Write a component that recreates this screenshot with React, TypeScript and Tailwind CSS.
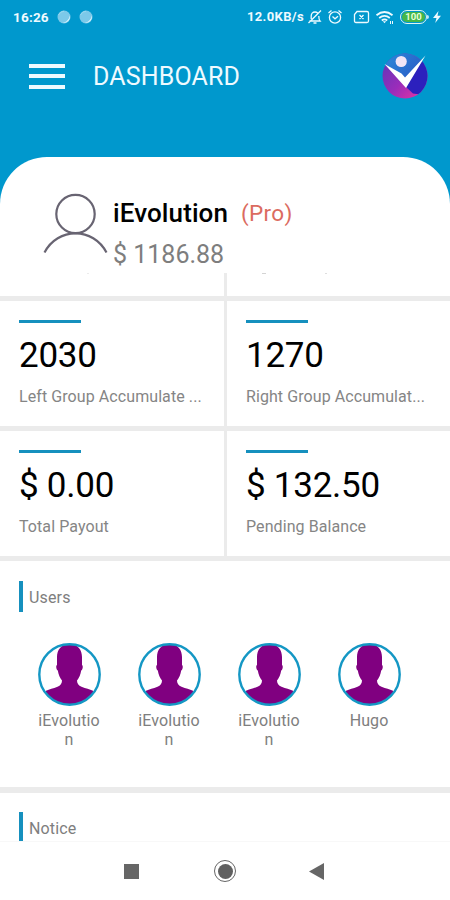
import type { ReactNode } from 'react';

const stats = [
  { value: '2030', label: 'Left Group Accumulate ...' },
  { value: '1270', label: 'Right Group Accumulat...' },
  { value: '$ 0.00', label: 'Total Payout' },
  { value: '$ 132.50', label: 'Pending Balance' },
];

const users = [
  { id: 1, name: 'iEvolution' },
  { id: 2, name: 'iEvolution' },
  { id: 3, name: 'iEvolution' },
  { id: 4, name: 'Hugo' },
];

export default function App() {
  return (
    <div className="flex h-[900px] w-[450px] flex-col overflow-hidden bg-white font-['Roboto',sans-serif]">
      <header className="flex h-[157px] shrink-0 flex-col bg-[#0098cd] text-[#eefaff]">
        <StatusBar />
        <div className="flex h-[84px] items-center pr-[22px] pl-[29px]">
          <div className="flex h-[25px] w-9 flex-col justify-between">
            <div className="h-1 bg-[#eefaff]" />
            <div className="h-1 bg-[#eefaff]" />
            <div className="h-1 bg-[#eefaff]" />
          </div>
          <h1 className="ml-7 pt-0.5 text-[25px] leading-8 tracking-[0.15px]">
            DASHBOARD
          </h1>
          <Logo />
        </div>
      </header>
      <ProfileCard />
      <main className="flex min-h-0 flex-1 flex-col overflow-hidden">
        <div className="grid h-[23px] shrink-0 grid-cols-[224px_223px] gap-x-[3px] bg-[#ebebeb]">
          <div className="bg-white pl-[87px]">
            <div className="h-px w-0.5 bg-[#ececec]" />
          </div>
          <div className="flex items-start gap-[59px] bg-white pl-[35px]">
            <div className="h-px w-1 bg-[#d4d4d4]" />
            <div className="h-px w-0.5 bg-[#dedede]" />
          </div>
        </div>
        <div className="grid shrink-0 grid-cols-[224px_223px] grid-rows-[125px_125px] gap-x-[3px] gap-y-[5px] bg-[#ebebeb] pt-[5px] pb-[5px]">
          {stats.map((stat) => (
            <StatCard key={stat.label} {...stat} />
          ))}
        </div>
        <section className="h-[226px] shrink-0 pt-5">
          <SectionTitle>Users</SectionTitle>
          <div className="mt-[31px] flex gap-[37px] pl-[37.500px]">
            {users.map((user) => (
              <div key={user.id} className="flex w-[63px] flex-col items-center">
                <Avatar />
                <p className="w-full pt-px text-center text-base leading-[19px] tracking-[0.1px] break-all text-[#7e7e7e]">
                  {user.name}
                </p>
              </div>
            ))}
          </div>
        </section>
        <div className="h-1.5 shrink-0 bg-[#ebebeb]" />
        <section className="pt-[19px]">
          <SectionTitle>Notice</SectionTitle>
        </section>
      </main>
      <NavigationBar />
    </div>
  );
}

function StatusBar() {
  return (
    <div className="flex h-[34px] items-center pr-[9px] pl-[13px] text-[13px] font-bold">
      <span className="w-9 text-[13.500px] tracking-[0.2px]">16:26</span>
      <Bubble />
      <Bubble />
      <span className="ml-auto text-[13px] tracking-[0.35px]">12.0KB/s</span>
      <svg
        viewBox="0 0 16 16"
        className="ml-[3px] size-4"
        fill="none"
        stroke="currentColor"
        strokeWidth="1.3"
      >
        <path d="M2.500 12H13c-1-1-1.200-2-1.200-5M4.200 10V7c0-2.400 1.400-4 3.800-4 1.200 0 2 .4 2.700 1M6.500 14h3M14 1.500 1.500 14" />
      </svg>
      <svg
        viewBox="0 0 16 16"
        className="ml-1 size-4"
        fill="none"
        stroke="currentColor"
        strokeWidth="1.3"
      >
        <circle cx="8" cy="8.500" r="5.600" />
        <path d="M1.500 4 4.500 1.500M14.500 4l-3-2.500M5.500 7.500 8 9.800l3-2.600" />
      </svg>
      <svg
        viewBox="0 0 17 14"
        className="ml-[10px] h-[14px] w-[17px]"
        fill="none"
        stroke="currentColor"
        strokeWidth="1.300"
      >
        <path d="M4 1.500h10q1.500 0 1.500 1.500v8q0 1.500-1.500 1.500H3Q1.500 12.500 1.500 11V4.500zM6.500 5l4 4M10.500 5l-4 4" />
      </svg>
      <svg
        viewBox="0 0 20 16"
        className="ml-[5px] h-4 w-5"
        fill="none"
        stroke="currentColor"
        strokeWidth="1.800"
      >
        <path d="M1.500 6.200q8-6.500 16 0M4.200 9q5.300-4.300 10.600 0M6.800 11.500q2.700-2.300 5.400 0" />
        <path d="m7.800 12.300 1.700 2 1.700-2z" fill="currentColor" stroke="none" />
        <path d="M15.500 12v3M17.500 12v3" strokeWidth="1" />
      </svg>
      <div className="ml-[5px] flex h-[14px] w-[27px] items-center rounded-full border border-[#dff4ee] p-px">
        <div className="flex h-[10px] w-full items-center justify-center rounded-full bg-[#45b649] text-[9.500px] leading-none text-[#e8ffd8]">
          100
        </div>
      </div>
      <div className="h-1 w-0.5 rounded-r bg-[#bfe8f5]" />
      <svg viewBox="0 0 8 12" className="ml-1 h-3 w-2" fill="currentColor">
        <path d="M5.500 0 0 7h3.500L2.200 12 8 4.800H4.500z" />
      </svg>
    </div>
  );
}

function Bubble() {
  return (
    <svg viewBox="0 0 14 14" className="ml-2 size-[14px]">
      <circle cx="7" cy="7" r="6.500" fill="#7cc9e9" />
      <path
        d="M12.800 5.500a6 6 0 0 1-7.300 7.100c4-.2 6.500-2.800 7.300-7.100z"
        fill="#e4f8ff"
      />
      <path d="M1.500 5Q3 1.500 7 1.200" fill="none" stroke="#9bd8ef" />
    </svg>
  );
}

function Logo() {
  return (
    <svg viewBox="0 0 46 46" className="ml-auto size-[46px]">
      <defs>
        <linearGradient id="logo-pink" x1="0" y1="0.3" x2="0.8" y2="1">
          <stop offset="0" stopColor="#6a35b8" />
          <stop offset="0.500" stopColor="#9a2cba" />
          <stop offset="1" stopColor="#e234a4" />
        </linearGradient>
        <linearGradient id="logo-blue" x1="0" y1="0" x2="1" y2="0.6">
          <stop offset="0" stopColor="#2b8edb" />
          <stop offset="1" stopColor="#2a55c4" />
        </linearGradient>
        <clipPath id="logo-clip">
          <circle cx="23" cy="23" r="22.500" />
        </clipPath>
      </defs>
      <g clipPath="url(#logo-clip)">
        <path d="M0 0h46v46H0z" fill="url(#logo-pink)" />
        <path d="M0 0h46v8L24 33 3 11z" fill="url(#logo-blue)" />
        <path d="M44 3 23 33l8 7.500 7 1L46 36V3z" fill="#2c20bd" />
      </g>
      <path d="M2.500 11 19.500 20.500l3.500 4L43.500 2.500 24 35z" fill="#fff" />
      <circle cx="19.200" cy="8.500" r="5.600" fill="#f1e4f6" />
    </svg>
  );
}

function ProfileCard() {
  return (
    <div className="h-[116px] shrink-0 bg-[linear-gradient(#0098cd_50px,#fff_50px)]">
      <div className="flex h-full rounded-t-[47px] bg-white pt-[36px] pl-[43px]">
        <svg
          viewBox="0 0 65 62"
          className="h-[62px] w-[65px]"
          fill="none"
          stroke="#686472"
          strokeWidth="2.200"
        >
          <circle cx="32.500" cy="21" r="19.200" />
          <path d="M1.500 59.500C8 47 20 40.300 32.500 40.300S57 47 63.500 59.500" />
        </svg>
        <div className="pl-[5px]">
          <div className="flex items-center gap-[13px] pt-1">
            <h2 className="text-[26px] leading-8 font-medium tracking-[0.1px] text-black">
              iEvolution
            </h2>
            <span className="text-[22.500px] leading-8 tracking-[0.3px] text-[#db6b60]">
              (Pro)
            </span>
          </div>
          <p className="mt-[10px] text-[25px] leading-8 text-[#7e7e7e]">
            $ 1186.88
          </p>
        </div>
      </div>
    </div>
  );
}

function StatCard({ value, label }: { value: string; label: string }) {
  return (
    <div className="bg-white pt-[19px] pl-[19px]">
      <div className="h-[3px] w-[62px] bg-[#1690be]" />
      <p className="mt-3 text-[35px] leading-[42px] tracking-[-0.25px] text-black">
        {value}
      </p>
      <p className="mt-[10px] text-base leading-5 tracking-[0.08px] whitespace-nowrap text-[#858585]">
        {label}
      </p>
    </div>
  );
}

function SectionTitle({ children }: { children: ReactNode }) {
  return (
    <div className="flex h-[31px] items-center pl-[19px]">
      <div className="h-full w-1 bg-[#1690be]" />
      <h3 className="pt-0.5 pl-1.5 text-base leading-5 tracking-[0.15px] text-[#7e7e7e]">
        {children}
      </h3>
    </div>
  );
}

function Avatar() {
  return (
    <svg viewBox="0 0 63 63" className="mb-1 size-[63px] shrink-0">
      <defs>
        <clipPath id="avatar-clip">
          <circle cx="31.500" cy="31.500" r="30" />
        </clipPath>
      </defs>
      <path
        clipPath="url(#avatar-clip)"
        fill="#800080"
        d="M31.500 1C40 1 44 7 44 14v8c1.200.3 1 4.500-.8 5.500-.7 4.500-2.200 7.500-4.200 10 0 3 1.500 5 4.500 6.200 4.500 1.800 8 2.300 11.500 4L58 63H5l3-15.300c3.500-1.700 7-2.200 11.500-4 3-1.200 4.500-3.200 4.500-6.200-2-2.500-3.500-5.500-4.200-10-1.800-1-2-5.200-.8-5.500v-8C19 7 23 1 31.500 1z"
      />
      <circle
        cx="31.500"
        cy="31.500"
        r="30.200"
        fill="none"
        stroke="#1497c4"
        strokeWidth="2.400"
      />
    </svg>
  );
}

function NavigationBar() {
  return (
    <nav className="flex h-[59px] shrink-0 items-center border-t border-[#f8f8f8] bg-white pl-[124px]">
      <div className="size-[15px] bg-[#666]" />
      <div className="ml-[75px] flex size-[22px] items-center justify-center rounded-full border-[1.500px] border-[#666]">
        <div className="size-[15px] rounded-full bg-[#606060]" />
      </div>
      <svg viewBox="0 0 15 17" className="ml-[73px] h-[17px] w-[15px]">
        <path d="M0 8.500 15 0v17z" fill="#666" />
      </svg>
    </nav>
  );
}
